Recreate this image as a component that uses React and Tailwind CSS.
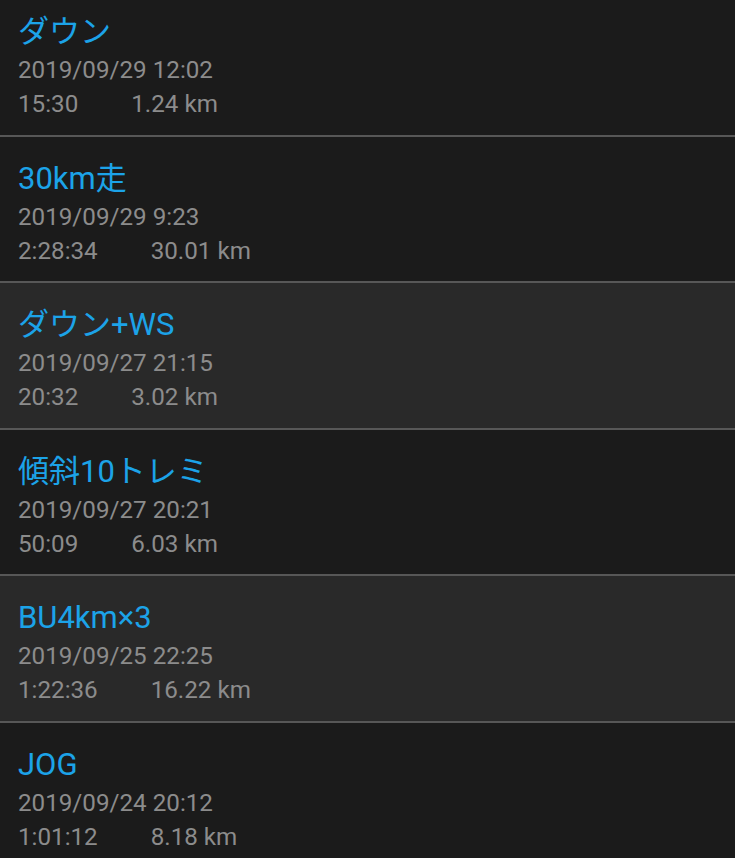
const runs = [
  { title: "ダウン", date: "2019/09/29 12:02", time: "15:30", dist: "1.24 km", light: false },
  { title: "30km走", date: "2019/09/29 9:23", time: "2:28:34", dist: "30.01 km", light: false },
  { title: "ダウン+WS", date: "2019/09/27 21:15", time: "20:32", dist: "3.02 km", light: true },
  { title: "傾斜10トレミ", date: "2019/09/27 20:21", time: "50:09", dist: "6.03 km", light: false },
  { title: "BU4km×3", date: "2019/09/25 22:25", time: "1:22:36", dist: "16.22 km", light: true },
  { title: "JOG", date: "2019/09/24 20:12", time: "1:01:12", dist: "8.18 km", light: false },
];

export default function App() {
  return (
    <div
      className="h-screen overflow-hidden bg-[#1b1b1b]"
      style={{ fontFamily: 'Roboto, "Noto Sans CJK JP", sans-serif' }}
    >
      <div className="-mt-[10px]">
        {runs.map((run, i) => (
          <div key={i}>
            <div className={`h-[144.5px] px-[18px] pt-[23px] ${run.light ? "bg-[#292929]" : "bg-[#1b1b1b]"}`}>
              <div className="text-[31px] leading-[38px] text-[#1ca3e8]">{run.title}</div>
              <div className="mt-[3px] text-[24.2px] leading-[33px] text-[#8c8c8c]">{run.date}</div>
              <div className="mt-[1px] flex text-[24.2px] leading-[33px] text-[#8c8c8c]">
                <span>{run.time}</span>
                <span className="ml-[53px]">{run.dist}</span>
              </div>
            </div>
            <div className="h-[2px] bg-[#575757]" />
          </div>
        ))}
      </div>
    </div>
  );
}
